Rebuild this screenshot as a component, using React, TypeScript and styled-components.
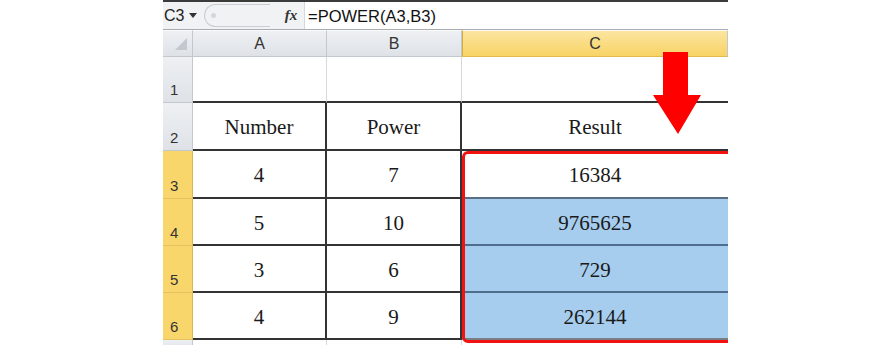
import * as React from "react";
import styled, { createGlobalStyle } from "styled-components";

const GlobalStyle = createGlobalStyle`
  html, body {
    margin: 0;
    padding: 0;
    background: #fff;
  }
`;

const sans = `"Liberation Sans", Arial, sans-serif`;
const serif = `"Liberation Serif", "Times New Roman", serif`;
const dark = "#333";
const light = "#d6d8da";
const headGray = "linear-gradient(#eef0f3, #dee2e7)";
const headLine = "#c3c8cf";
const gold = "#f9d66c";

const Frame = styled.div`
  margin-left: 163px;
  width: 565px;
  height: 345px;
  overflow: hidden;
  display: flex;
  flex-direction: column;
`;

const FormulaBar = styled.div`
  flex-shrink: 0;
  height: 30px;
  box-sizing: border-box;
  border-top: 2px solid #3b3b3b;
  border-bottom: 1px solid #a9adb2;
  background: #f1f2f4;
  display: flex;
  align-items: center;
`;

const NameBox = styled.div`
  width: 38px;
  display: flex;
  align-items: center;
  gap: 5px;
  padding-left: 1px;
  font-family: ${sans};
  font-size: 16px;
  color: #222;
`;

const Splitter = styled.div`
  width: 66px;
  height: 23px;
  margin-left: 2px;
  box-sizing: border-box;
  border: 1px solid #c9cdd2;
  border-right: none;
  border-radius: 12px 0 0 12px;
  display: flex;
  align-items: center;
  padding-left: 6px;
`;

const Dot = styled.span`
  width: 5px;
  height: 5px;
  border-radius: 50%;
  background: #d3d6da;
`;

const Fx = styled.span`
  width: 26px;
  font-family: ${serif};
  font-style: italic;
  font-weight: bold;
  font-size: 15px;
  color: #333;
  text-align: center;
  margin-left: 8px;
`;

const Input = styled.div`
  flex: 1;
  align-self: stretch;
  background: #fff;
  border-left: 1px solid #d4d7db;
  display: flex;
  align-items: center;
  padding: 2px 0 0 3px;
  font-family: ${sans};
  font-size: 16.5px;
  color: #111;
`;

const Sheet = styled.div`
  position: relative;
  flex-shrink: 0;
  display: grid;
  grid-template-columns: 30px 134px 135px 266px;
  grid-template-rows: 27px 46px 48px 48px 47px 47px 47px 10px;
`;

const ColHead = styled.div<{ $active?: boolean }>`
  box-sizing: border-box;
  background: ${(p) => (p.$active ? "linear-gradient(#fbe5a0, #f8d365)" : headGray)};
  border-top: 1px solid #fafafa;
  border-right: 1px solid ${headLine};
  border-bottom: 1px solid ${(p) => (p.$active ? "#e2b94a" : headLine)};
  border-left: ${(p) => (p.$active ? "1px solid #d6ac3c" : "none")};
  display: flex;
  align-items: center;
  justify-content: center;
  font-family: ${sans};
  font-size: 16px;
  color: #333;
`;

const Corner = styled.div`
  box-sizing: border-box;
  background: ${headGray};
  border-top: 1px solid #fafafa;
  border-right: 1px solid ${headLine};
  border-bottom: 1px solid ${headLine};
  display: flex;
  align-items: flex-end;
  justify-content: flex-end;
  padding: 0 5px 6px 0;
`;

const CornerMark = styled.span`
  width: 0;
  height: 0;
  border-left: 12px solid transparent;
  border-bottom: 12px solid #c3c8ce;
`;

const RowHead = styled.div<{ $active?: boolean }>`
  box-sizing: border-box;
  background: ${(p) => (p.$active ? gold : headGray)};
  border-right: 1px solid ${(p) => (p.$active ? "#ddb54c" : headLine)};
  border-bottom: 1px solid ${(p) => (p.$active ? "#e6c25e" : headLine)};
  display: flex;
  align-items: flex-end;
  padding: 0 0 4px 7px;
  font-family: ${sans};
  font-size: 15px;
  color: #333;
`;

const Cell = styled.div<{ $blue?: boolean; $right?: string; $bottom?: string; $rightW?: number }>`
  box-sizing: border-box;
  background: ${(p) => (p.$blue ? "#a6cdee" : "#fff")};
  border-right: ${(p) => (p.$right ? `${p.$rightW ?? 2}px solid ${p.$right}` : "none")};
  border-bottom: ${(p) => (p.$bottom ? `2px solid ${p.$bottom}` : "none")};
  display: flex;
  align-items: center;
  justify-content: center;
  padding-top: 3px;
  font-family: ${serif};
  font-size: 21px;
  color: #1a1a1a;
`;

const Selection = styled.div`
  position: absolute;
  left: 299px;
  top: 121px;
  width: 290px;
  height: 192px;
  box-sizing: border-box;
  border: 3px solid #f21212;
  border-radius: 6px;
  pointer-events: none;
`;

const Arrow = styled.svg`
  position: absolute;
  left: 490px;
  top: 22px;
`;

interface Row {
  n: number;
  values: string[];
  active?: boolean;
}

const rows: Row[] = [
  { n: 1, values: ["", "", ""] },
  { n: 2, values: ["Number", "Power", "Result"] },
  { n: 3, values: ["4", "7", "16384"], active: true },
  { n: 4, values: ["5", "10", "9765625"], active: true },
  { n: 5, values: ["3", "6", "729"], active: true },
  { n: 6, values: ["4", "9", "262144"], active: true },
];

const cBottom = (n: number) => {
  if (n <= 2) return dark;
  if (n === 3) return "#5b6f84";
  if (n === 6) return "#7a7f86";
  return "#4f6e8d";
};

const App: React.FC = () => (
  <>
    <GlobalStyle />
    <Frame>
      <FormulaBar>
        <NameBox>
          C3
          <svg width="8" height="5" viewBox="0 0 8 5">
            <polygon points="0,0 8,0 4,5" fill="#333" />
          </svg>
        </NameBox>
        <Splitter>
          <Dot />
        </Splitter>
        <Fx>fx</Fx>
        <Input>=POWER(A3,B3)</Input>
      </FormulaBar>
      <Sheet>
        <Corner>
          <CornerMark />
        </Corner>
        <ColHead>A</ColHead>
        <ColHead>B</ColHead>
        <ColHead $active>C</ColHead>
        {rows.map((r) => (
          <React.Fragment key={r.n}>
            <RowHead $active={r.active}>{r.n}</RowHead>
            <Cell $right={r.n === 1 ? light : dark} $rightW={r.n === 1 ? 1 : 2} $bottom={dark}>
              {r.values[0]}
            </Cell>
            <Cell $right={r.n === 1 ? light : dark} $rightW={r.n === 1 ? 1 : 2} $bottom={dark}>
              {r.values[1]}
            </Cell>
            <Cell $blue={r.n >= 4} $bottom={cBottom(r.n)}>
              {r.values[2]}
            </Cell>
          </React.Fragment>
        ))}
        <RowHead />
        <Cell $right={light} $rightW={1} />
        <Cell $right={light} $rightW={1} />
        <Cell />
        <Selection />
        <Arrow width="48" height="82" viewBox="0 0 48 82">
          <polygon points="10,0 35,0 35,43 48,43 25,82 0,43 10,43" fill="#ff0000" />
        </Arrow>
      </Sheet>
    </Frame>
  </>
);

export default App;
